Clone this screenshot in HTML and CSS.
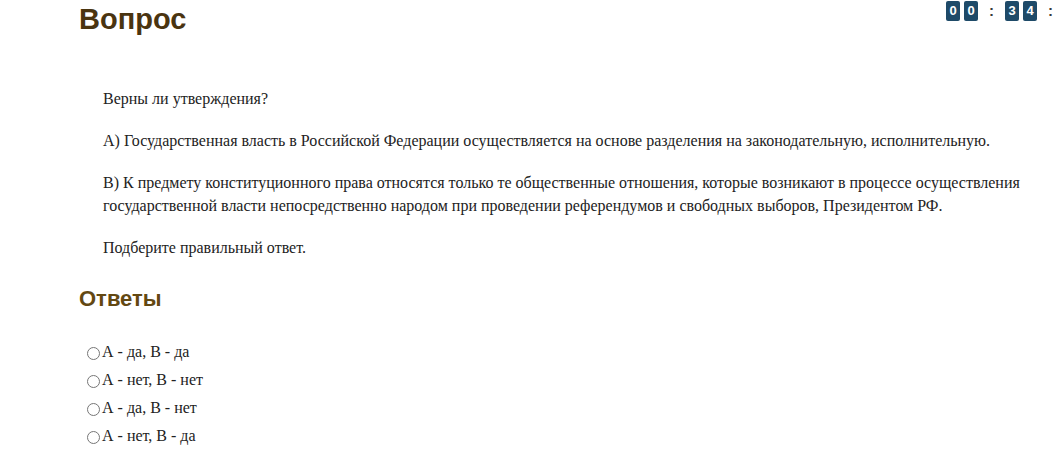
FILE: index.html
```html
<!DOCTYPE html>
<html lang="ru">
<head>
<meta charset="utf-8">
<link rel="stylesheet" href="styles.css">
</head>
<body>
<div class="page">
  <div class="top">
    <h1 class="title">Вопрос</h1>
    <div class="timer">
      <span class="digit">0</span><span class="digit">0</span><span class="colon">:</span><span class="digit">3</span><span class="digit">4</span><span class="colon colon-end">:</span>
    </div>
  </div>
  <div class="question">
    <p>Верны ли утверждения?</p>
    <p>А) Государственная власть в Российской Федерации осуществляется на основе разделения на законодательную, исполнительную.</p>
    <p>В) К предмету конституционного права относятся только те общественные отношения, которые возникают в процессе осуществления государственной власти непосредственно народом при проведении референдумов и свободных выборов, Президентом РФ.</p>
    <p>Подберите правильный ответ.</p>
  </div>
  <h2 class="answers-title">Ответы</h2>
  <ul class="answers">
    <li><label><input type="radio" name="a">А - да, В - да</label></li>
    <li><label><input type="radio" name="a">А - нет, В - нет</label></li>
    <li><label><input type="radio" name="a">А - да, В - нет</label></li>
    <li><label><input type="radio" name="a">А - нет, В - да</label></li>
  </ul>
</div>
</body>
</html>
```

FILE: styles.css
```css
html, body {
  margin: 0;
  padding: 0;
  background: #ffffff;
  overflow: hidden;
}
body {
  font-family: "Liberation Serif", "Times New Roman", serif;
  color: #222222;
}
.page {
  padding: 0 0 0 79px;
}
.top {
  display: flex;
  justify-content: space-between;
  align-items: flex-start;
}
.title {
  margin: 0;
  padding-top: 2px;
  font-family: "Liberation Sans", Arial, sans-serif;
  font-size: 29px;
  font-weight: bold;
  line-height: 34px;
  color: #4a3410;
}
.timer {
  display: flex;
  align-items: center;
  padding-top: 1px;
}
.digit {
  display: inline-block;
  width: 14px;
  height: 20px;
  margin-right: 4px;
  background: #1e4a68;
  color: #ffffff;
  border-radius: 2px;
  font-family: "Liberation Sans", Arial, sans-serif;
  font-size: 13px;
  font-weight: bold;
  line-height: 20px;
  text-align: center;
}
.colon {
  display: inline-block;
  width: 27px;
  margin-left: -4px;
  text-align: center;
  font-family: "Liberation Sans", Arial, sans-serif;
  font-size: 15px;
  font-weight: bold;
  color: #3a3a3a;
  line-height: 20px;
}
.colon-end {
  width: 20px;
  padding-left: 11px;
  box-sizing: border-box;
  text-align: left;
}
.question {
  padding: 0 24px 0 24px;
  margin-top: 51px;
  font-family: "Liberation Serif", serif;
  font-size: 16px;
  line-height: 23px;
}
.question p {
  margin: 0 0 19px 0;
}
.answers-title {
  margin: 27px 0 0 0;
  font-family: "Liberation Sans", Arial, sans-serif;
  font-size: 22px;
  font-weight: bold;
  line-height: 26px;
  color: #634812;
}
.answers {
  list-style: none;
  margin: 26px 0 0 0;
  padding: 0 0 0 8px;
  font-family: "Liberation Serif", serif;
  font-size: 16px;
}
.answers li {
  height: 28px;
  line-height: 28px;
}
.answers label {
  display: flex;
  align-items: center;
}
.answers input {
  margin: 2px 2px 0 0;
  width: 13px;
  height: 13px;
}
```
